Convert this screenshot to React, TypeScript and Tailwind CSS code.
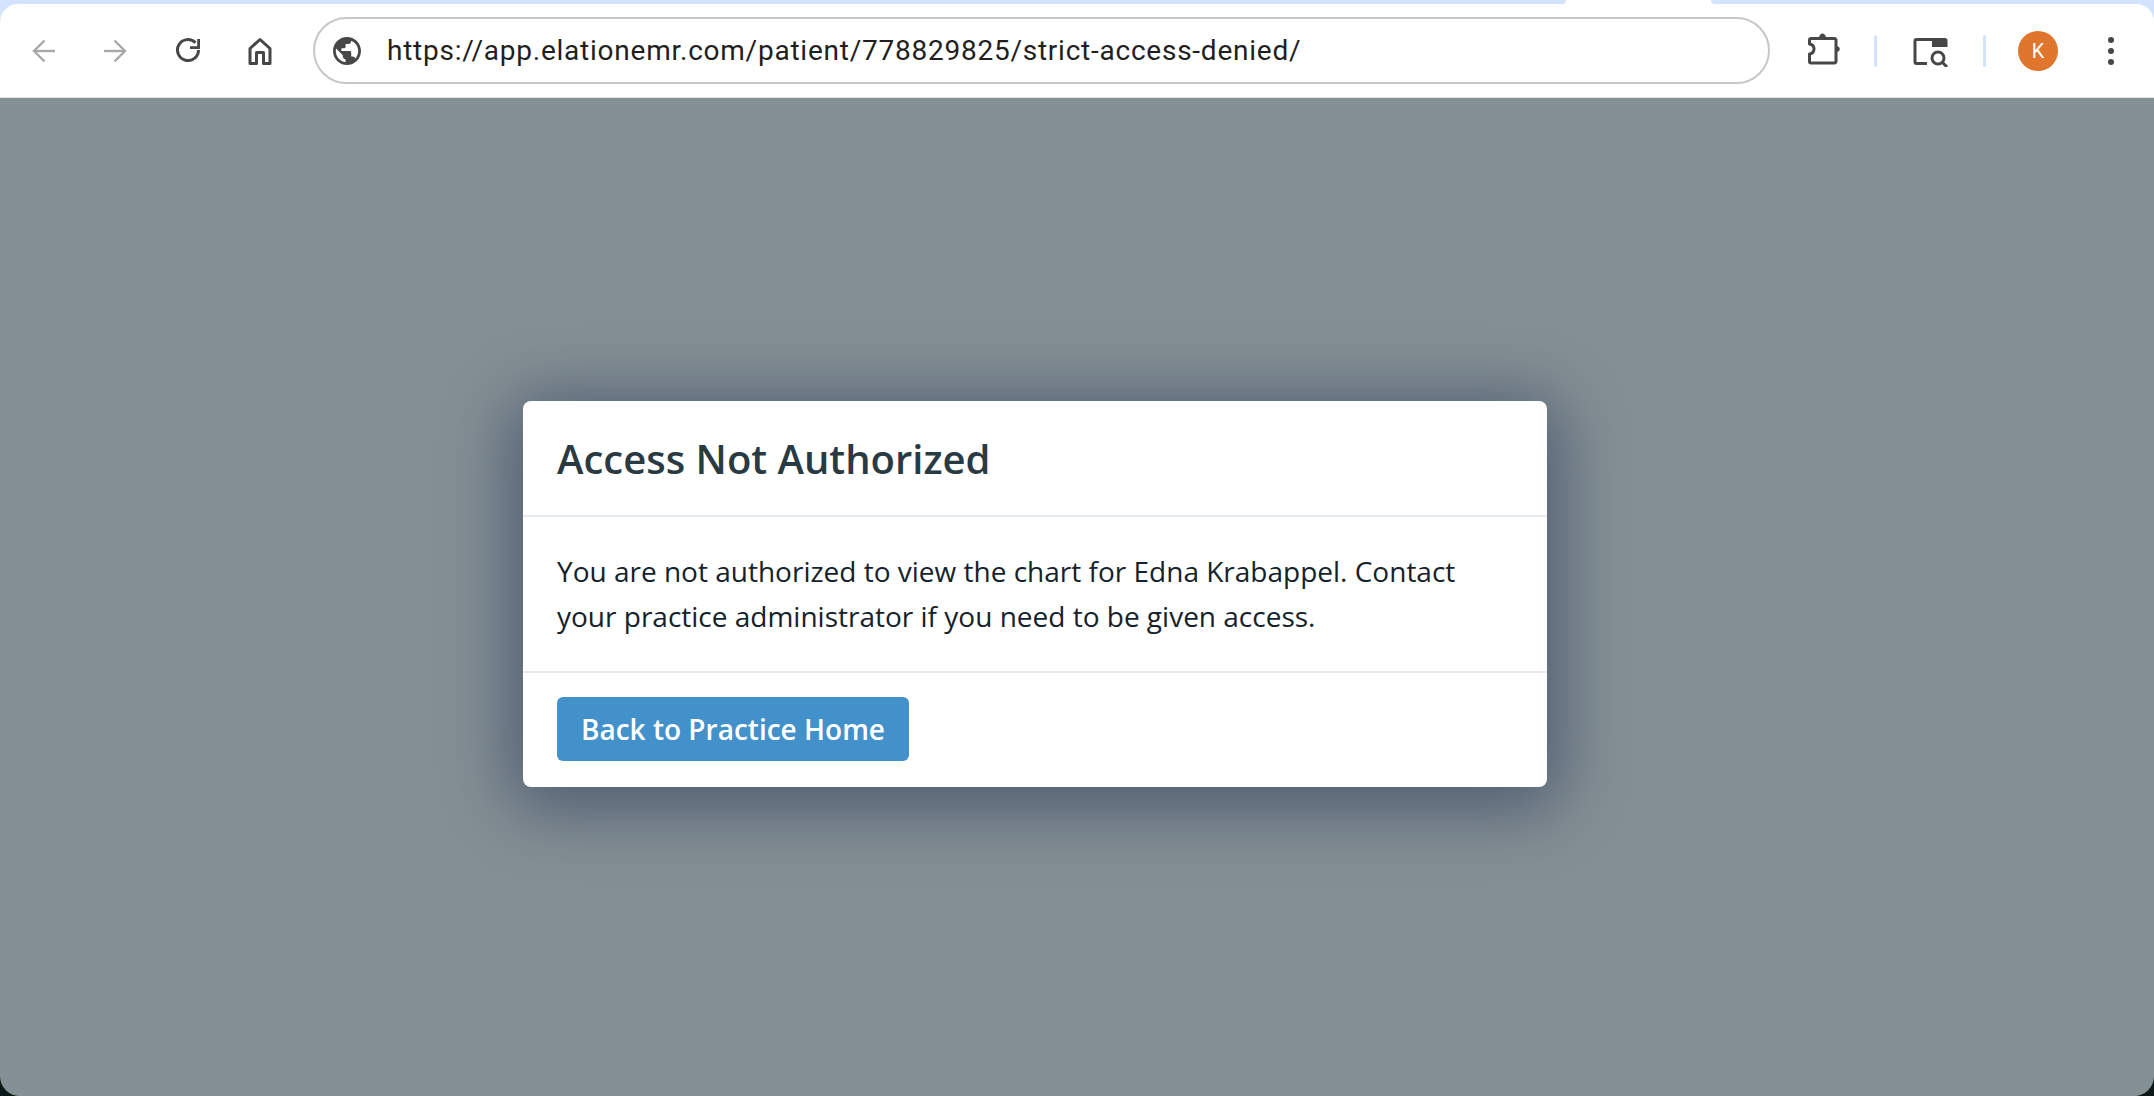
function BackIcon({ className }: { className?: string }) {
  return (
    <svg viewBox="0 0 24 24" className={className} fill="none" stroke="currentColor" strokeWidth="2.4">
      <path d="M23 12H2.500" />
      <path d="M12.500 1.500 2 12l10.500 10.500" />
    </svg>
  );
}

function ForwardIcon({ className }: { className?: string }) {
  return (
    <svg viewBox="0 0 24 24" className={className} fill="none" stroke="currentColor" strokeWidth="2.4">
      <path d="M1 12h20.500" />
      <path d="M11.500 1.500 22 12 11.500 22.500" />
    </svg>
  );
}

function ReloadIcon({ className }: { className?: string }) {
  return (
    <svg viewBox="0 0 28 28" className={className} fill="none">
      <path d="M21.500 5.700A10.500 10.500 0 1 0 24.500 13" stroke="currentColor" strokeWidth="3" />
      <path d="M26 2v10H16V9.200h7.200V2z" fill="currentColor" />
    </svg>
  );
}

function HomeIcon({ className }: { className?: string }) {
  return (
    <svg viewBox="0 0 26 28" className={className} fill="none" stroke="currentColor" strokeWidth="3">
      <path d="M3 11.500 13 2.500l10 9V26.500h-6.500V15.500h-7V26.500H3z" strokeLinejoin="round" />
    </svg>
  );
}

function GlobeIcon({ className }: { className?: string }) {
  return (
    <svg viewBox="2 2 20 20" className={className} fill="currentColor">
      <path d="M12 2C6.480 2 2 6.480 2 12s4.480 10 10 10 10-4.480 10-10S17.520 2 12 2zm-1 17.930c-3.950-.490-7-3.850-7-7.930 0-.620.080-1.210.210-1.790L9 15v1c0 1.100.900 2 2 2v1.930zm6.900-2.540c-.260-.810-1-1.390-1.900-1.390h-1v-3c0-.550-.450-1-1-1H8v-2h2c.550 0 1-.450 1-1V7h2c1.100 0 2-.900 2-2v-.410c2.930 1.190 5 4.060 5 7.410 0 2.080-.800 3.970-2.100 5.390z" />
    </svg>
  );
}

function PuzzleIcon({ className }: { className?: string }) {
  return (
    <svg viewBox="0 0 32 32" className={className} fill="none">
      <path
        d="M3 5.500h23.500a1.500 1.500 0 0 1 1.500 1.500v21.500a1.500 1.500 0 0 1-1.500 1.500H3a1.500 1.500 0 0 1-1.500-1.500v-7.500c3-.500 4.500-2.500 4.500-5s-1.500-4.500-4.500-5V7A1.500 1.500 0 0 1 3 5.500z"
        stroke="currentColor"
        strokeWidth="3"
        strokeLinejoin="round"
      />
      <path d="M11 5c0-3 2-4.500 3.500-4.500S18 2 18 5z" fill="currentColor" />
      <path d="M28 13c2 0 3.800 1.200 3.800 3s-1.800 3-3.800 3z" fill="currentColor" />
    </svg>
  );
}

function SearchPanelIcon({ className }: { className?: string }) {
  return (
    <svg viewBox="0 0 36 32" className={className} fill="none">
      <path d="M19 4.500H3.500a1.500 1.500 0 0 0-1.500 1.500v21a1.500 1.500 0 0 0 1.500 1.500H14" stroke="currentColor" strokeWidth="3" />
      <path d="M19 3h13a2.500 2.500 0 0 1 2.500 2.500V12H19z" fill="currentColor" />
      <circle cx="25" cy="23" r="6" stroke="currentColor" strokeWidth="3" />
      <path d="m29.500 27.500 4.500 4.500" stroke="currentColor" strokeWidth="3" />
    </svg>
  );
}

function App() {
  return (
    <div className="flex h-[1096px] w-full flex-col overflow-hidden bg-[#0c1a17]">
      <header className="bg-[#d3e3fd]">
        <div className="flex h-1 bg-white">
          <div className="w-[1566px] rounded-br-[8px] bg-[#d3e3fd]"></div>
          <div className="flex-1"></div>
          <div className="w-[443px] rounded-bl-[8px] bg-[#d3e3fd]"></div>
        </div>
        <div className="flex h-[93px] items-center rounded-t-[18px] bg-white pl-[32px] pr-[36px] text-[#474747]">
          <BackIcon className="h-6 w-6 text-[#a8a8a8]" />
          <ForwardIcon className="ml-[47px] h-6 w-6 text-[#a8a8a8]" />
          <ReloadIcon className="ml-[47px] h-7 w-7" />
          <HomeIcon className="ml-[45px] h-7 w-[26px]" />
          <div className="ml-[40px] flex h-[67px] w-[1457px] items-center rounded-full border-2 border-[#c7c7c7] pl-[18px]">
            <GlobeIcon className="h-7 w-7" />
            <span className="ml-[26px] font-['Roboto',sans-serif] text-[28px] tracking-[0.76px] text-[#1f1f1f]">
              https://app.elationemr.com/patient/778829825/strict-access-denied/
            </span>
          </div>
          <PuzzleIcon className="mb-[4px] ml-[38px] h-8 w-8" />
          <div className="ml-[34px] h-8 w-[3px] rounded-full bg-[#d3e3fd]"></div>
          <SearchPanelIcon className="ml-[36px] h-8 w-9" />
          <div className="ml-[34px] h-8 w-[3px] rounded-full bg-[#d3e3fd]"></div>
          <div className="ml-[32px] flex h-10 w-10 items-center justify-center rounded-full bg-[#e0752d] font-['Roboto',sans-serif] text-[20px] text-white">
            K
          </div>
          <div className="ml-[50px] flex flex-col gap-[5px]">
            <span className="h-[6px] w-[6px] rounded-full bg-[#474747]"></span>
            <span className="h-[6px] w-[6px] rounded-full bg-[#474747]"></span>
            <span className="h-[6px] w-[6px] rounded-full bg-[#474747]"></span>
          </div>
        </div>
        <div className="h-px bg-[#e3e3e3]"></div>
      </header>

      <main className="flex-1 rounded-b-[20px] bg-[#859095] pl-[523px] pt-[303px]">
        <div className="w-[1024px] rounded-[8px] bg-white font-['Open_Sans',sans-serif] shadow-[0_10px_70px_12px_rgba(40,55,85,0.6)]">
          <div className="flex h-[116px] items-center border-b-2 border-[#e6ebf0] px-[34px] pt-[2px]">
            <h1 className="text-[40px] font-semibold leading-none text-[#2a3a42]">Access Not Authorized</h1>
          </div>
          <div className="border-b-2 border-[#e6ebf0] px-[34px] pb-[32px] pt-[32px] text-[28px] leading-[45px] text-[#15222b]">
            <p>
              You are not authorized to view the chart for Edna Krabappel. Contact
              <br />
              your practice administrator if you need to be given access.
            </p>
          </div>
          <div className="px-[34px] pb-[26px] pt-[24px]">
            <button className="flex h-[64px] w-[352px] items-center justify-center rounded-[6px] bg-[#4291cb] text-[28px] font-semibold text-white">
              Back to Practice Home
            </button>
          </div>
        </div>
      </main>
    </div>
  );
}

export default App;
